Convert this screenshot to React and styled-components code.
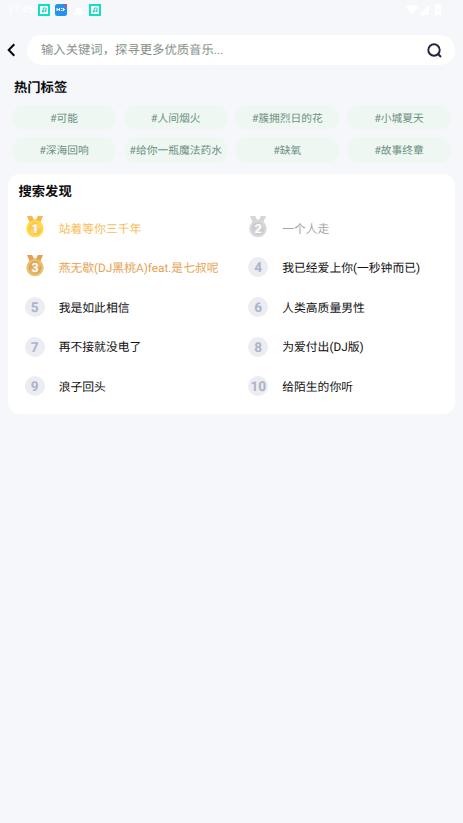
import React from "react";
import styled, { createGlobalStyle } from "styled-components";

const Global = createGlobalStyle`
  * { box-sizing: border-box; }
  body {
    margin: 0;
    background: #f5f7fb;
    font-family: Roboto, "Noto Sans CJK SC", sans-serif;
    text-rendering: geometricPrecision;
  }
`;
const Screen = styled.main`
  width: 463px;
  height: 823px;
  overflow: hidden;
  background: #f5f7fb;
`;
const StatusBar = styled.header`
  height: 19px;
  padding: 0 20px 0 7px;
  display: flex;
  align-items: center;
  justify-content: space-between;
  color: #fff;
`;
const StatusGroup = styled.div`
  display: flex;
  align-items: center;
  gap: ${(p) => p.$gap}px;
`;
const Clock = styled.time`
  width: 26px;
  font-size: 11px;
  line-height: 19px;
  white-space: nowrap;
`;
const SearchRow = styled.div`
  height: 30px;
  margin-top: 16px;
  padding: 0 8px 0 7px;
  display: flex;
  align-items: center;
`;
const BackButton = styled.button`
  width: 20px;
  height: 30px;
  padding: 0;
  border: 0;
  background: none;
  display: flex;
  align-items: center;
`;
const SearchField = styled.div`
  flex: 1;
  height: 30px;
  border-radius: 15px;
  background: #fff;
  padding: 0 13px 0 14px;
  display: flex;
  align-items: center;
  justify-content: space-between;
  color: #86918b;
  font-size: 12.35px;
  line-height: 30px;
`;
const Placeholder = styled.span`
  padding-top: 3px;
  line-height: 27px;
`;
const Title = styled.h2`
  margin: 0;
  font-size: 13.3px;
  line-height: 20px;
  font-weight: 700;
  color: #0c0c0e;
`;
const TagSection = styled.section`
  padding: 13px 12px 0;
`;
const TagTitle = styled(Title)`
  padding: 1px 0 0 2px;
  line-height: 19px;
`;
const TagGrid = styled.div`
  margin-top: 6.5px;
  display: grid;
  grid-template-columns: repeat(4, 104px);
  justify-content: space-between;
  row-gap: 7px;
`;
const Tag = styled.div`
  height: 25.5px;
  border-radius: 13px;
  background: #eff7f3;
  color: #6c8f82;
  font-size: 10.75px;
  line-height: 27px;
  text-align: center;
  white-space: nowrap;
`;
const Card = styled.section`
  margin: 11.5px 8px 0;
  height: 240px;
  padding: 9px 0 0;
  border-radius: 12px;
  background: #fff;
`;
const CardTitle = styled(Title)`
  padding-left: 10.5px;
`;
const SongGrid = styled.div`
  margin-top: 5px;
  display: grid;
  grid-template-columns: 223.5px 223.5px;
  grid-auto-rows: 39.65px;
`;
const Song = styled.div`
  padding-left: 16.7px;
  display: flex;
  align-items: center;
  gap: 14px;
  color: ${(p) => p.$color};
  font-size: 11.8px;
  line-height: 20px;
  white-space: nowrap;
`;
const SongName = styled.span`
  padding-top: 1.5px;
`;
const Rank = styled.span`
  width: 20px;
  height: 20px;
  border-radius: 50%;
  background: #ecedf2;
  color: #adb3c6;
  font-size: 13.6px;
  font-weight: 700;
  line-height: 22px;
  display: flex;
  justify-content: center;
`;
const MedalBox = styled.span`
  width: 20px;
  height: 22px;
  display: flex;
  justify-content: center;
  margin-top: -2px;
`;

const medals = {
  1: { ribbon: "#fab64b", outer: "#ffdc40", inner: "#fcc653", shine: "#fdd07a" },
  2: { ribbon: "#d6d6d8", outer: "#d9d8dc", inner: "#cccbd0", shine: "#d5d4d8" },
  3: { ribbon: "#e8a04f", outer: "#e8c46e", inner: "#dfa659", shine: "#e5b371" },
};

function Medal({ rank }) {
  const m = medals[rank];
  return (
    <MedalBox>
      <svg width="20" height="22" viewBox="0 0 20 22">
        <path d="M2 0h5.200l1.600 3.500h2.400L12.800 0H18l-2.700 6.500H4.700Z" fill={m.ribbon} />
        <circle cx="10" cy="12.600" r="8.700" fill={m.outer} />
        <circle cx="10" cy="12.600" r="6.500" fill={m.inner} />
        <path d="M4.500 15.800 13.200 7a6.500 6.500 0 0 1 3 3.500L7.800 18.700a6.500 6.500 0 0 1-3.300-2.900Z" fill={m.shine} />
        <text x="10" y="17" textAnchor="middle" fontFamily="Roboto, sans-serif" fontSize="12.500" fontWeight="700" fill="#fff">{rank}</text>
      </svg>
    </MedalBox>
  );
}

function MusicBadge() {
  return (
    <svg width="12" height="12" viewBox="0 0 12 12">
      <rect width="12" height="12" fill="#0ee0c4" />
      <rect x="2" y="2" width="8" height="8" rx=".5" fill="#fff" />
      <path d="M5.200 7.300V4h2.800v2.800" fill="none" stroke="#0ec9b4" strokeWidth=".9" />
      <circle cx="4.700" cy="7.500" r="1" fill="#0ec9b4" />
      <circle cx="7.400" cy="7" r="1" fill="#0ec9b4" />
    </svg>
  );
}

const tags = ["#可能", "#人间烟火", "#簇拥烈日的花", "#小城夏天", "#深海回响", "#给你一瓶魔法药水", "#缺氧", "#故事终章"];
const songs = ["站着等你三千年", "一个人走", "燕无歇(DJ黑桃A)feat.是七叔呢", "我已经爱上你(一秒钟而已)", "我是如此相信", "人类高质量男性", "再不接就没电了", "为爱付出(DJ版)", "浪子回头", "给陌生的你听"];
const songColors = ["#fbbd55", "#a5a5a5", "#e5a354"];

export default function App() {
  return (
    <Screen>
      <Global />
      <StatusBar>
        <StatusGroup $gap={5}>
          <Clock>11:45</Clock>
          <MusicBadge />
          <svg width="12" height="12" viewBox="0 0 12 12">
            <rect width="12" height="12" rx="2.500" fill="#2592ef" />
            <path d="M2 4v3M4.500 4v3M2 5.500h2.500M6 4.500h1.500M6 6.500h1.500M8.500 4v3M8.500 5.500h1.500" stroke="#fff" strokeWidth="1" />
            <path d="M8.500 0H12v3.500Z" fill="#ee4550" />
          </svg>
          <svg width="12" height="12" viewBox="0 0 12 12">
            <path d="M4 3 5 4h2.500L9 2.500V6l1.500 2v3H3L1 9l1-1 1.500 1Z" fill="#fff" />
          </svg>
          <MusicBadge />
        </StatusGroup>
        <StatusGroup $gap={1}>
          <svg width="12" height="10" viewBox="0 0 12 10"><path d="M0 2.200Q6-2 12 2.200L6 10Z" fill="#fff" /></svg>
          <svg width="11" height="10" viewBox="0 0 11 10"><path d="M10 0v10H0Z" fill="#fff" /></svg>
          <svg width="12" height="11" viewBox="0 0 12 11"><path d="M4 1h1.500V0h3v1H10v10H4Z" fill="#fff" /><path d="M7.500 3 5.500 6h1.300v2.500l2-3H7.500Z" fill="#f5f7fb" /></svg>
        </StatusGroup>
      </StatusBar>
      <SearchRow>
        <BackButton aria-label="返回">
          <svg width="9" height="14" viewBox="0 0 9 14"><path d="M7.300 1.200 1.700 7l5.600 5.800" fill="none" stroke="#050505" strokeWidth="2" /></svg>
        </BackButton>
        <SearchField>
          <Placeholder>输入关键词，探寻更多优质音乐...</Placeholder>
          <svg width="15" height="15" viewBox="0 0 15 15">
            <circle cx="7" cy="7" r="5.700" fill="none" stroke="#20253d" strokeWidth="1.900" />
            <path d="m10.500 10.500 3.500 3.500" stroke="#20253d" strokeWidth="2" />
          </svg>
        </SearchField>
      </SearchRow>
      <TagSection>
        <TagTitle>热门标签</TagTitle>
        <TagGrid>{tags.map((t) => <Tag key={t}>{t}</Tag>)}</TagGrid>
      </TagSection>
      <Card>
        <CardTitle>搜索发现</CardTitle>
        <SongGrid>
          {songs.map((name, i) => (
            <Song key={name} $color={songColors[i] || "#111"}>
              {i < 3 ? <Medal rank={i + 1} /> : <Rank>{i + 1}</Rank>}
              <SongName>{name}</SongName>
            </Song>
          ))}
        </SongGrid>
      </Card>
    </Screen>
  );
}
